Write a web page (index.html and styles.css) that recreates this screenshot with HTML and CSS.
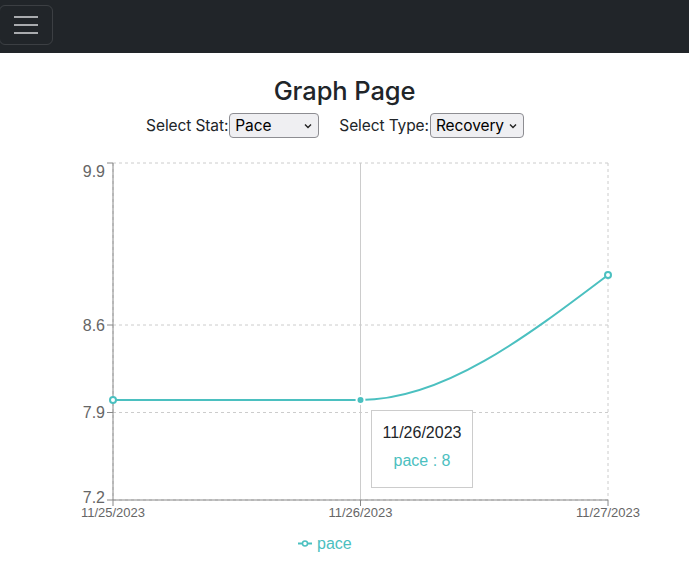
FILE: index.html
```html
<!DOCTYPE html>
<html lang="en">
<head>
<meta charset="utf-8">
<title>Graph Page</title>
<link rel="stylesheet" href="styles.css">
</head>
<body>
<nav class="navbar">
  <button class="toggler" type="button" aria-label="Toggle navigation">
    <span class="bar"></span><span class="bar"></span><span class="bar"></span>
  </button>
</nav>
<main class="page">
  <h1 class="title">Graph Page</h1>
  <div class="controls">
    <label class="control">Select Stat:<span class="select select-stat">Pace<svg class="chev" viewBox="0 0 8 6"><path d="M1 1.5 L4 4.5 L7 1.5" /></svg></span></label>
    <label class="control">Select Type:<span class="select select-type">Recovery<svg class="chev" viewBox="0 0 8 6"><path d="M1 1.5 L4 4.5 L7 1.5" /></svg></span></label>
  </div>
  <div class="chart">
    <svg class="chart-svg" width="689" height="420" viewBox="0 0 689 420">
      <g class="grid">
        <line x1="113" y1="13" x2="608" y2="13"/>
        <line x1="113" y1="175" x2="608" y2="175"/>
        <line x1="113" y1="262.5" x2="608" y2="262.5"/>
        <line x1="113" y1="350" x2="608" y2="350"/>
        <line x1="113" y1="13" x2="113" y2="350"/>
        <line x1="360.5" y1="13" x2="360.5" y2="350"/>
        <line x1="608" y1="13" x2="608" y2="350"/>
      </g>
      <line class="cursor" x1="360.5" y1="13" x2="360.5" y2="350"/>
      <g class="axis">
        <line x1="113" y1="13" x2="113" y2="350"/>
        <line x1="107" y1="13" x2="113" y2="13"/>
        <line x1="107" y1="175" x2="113" y2="175"/>
        <line x1="107" y1="262.5" x2="113" y2="262.5"/>
        <line x1="107" y1="350" x2="113" y2="350"/>
        <line x1="113" y1="350" x2="608" y2="350"/>
        <line x1="113" y1="350" x2="113" y2="356"/>
        <line x1="360.5" y1="350" x2="360.5" y2="356"/>
        <line x1="608" y1="350" x2="608" y2="356"/>
      </g>
      <g class="ytick">
        <text x="105" y="26.5">9.9</text>
        <text x="105" y="181">8.6</text>
        <text x="105" y="268">7.9</text>
        <text x="105" y="353">7.2</text>
      </g>
      <g class="xtick">
        <text x="113" y="367">11/25/2023</text>
        <text x="360.5" y="367">11/26/2023</text>
        <text x="608" y="367">11/27/2023</text>
      </g>
      <path class="series" d="M113,250 L360.5,250 C443,250 525.5,187.5 608,125"/>
      <circle class="dot" cx="113" cy="250" r="3"/>
      <circle class="dot" cx="608" cy="125" r="3"/>
      <circle class="active-dot" cx="360.5" cy="250" r="4"/>
      <g class="legend">
        <line x1="298" y1="393.5" x2="312" y2="393.5"/>
        <circle cx="305" cy="393.5" r="2.5"/>
        <text x="317" y="399">pace</text>
      </g>
    </svg>
    <div class="tooltip">
      <p class="tooltip-label">11/26/2023</p>
      <p class="tooltip-item">pace : 8</p>
    </div>
  </div>
</main>
</body>
</html>
```

FILE: styles.css
```css
* { box-sizing: border-box; }
body {
  margin: 0;
  font-family: "Liberation Sans", Arial, sans-serif;
  font-size: 16px;
  color: #212529;
  background: #fff;
}
.navbar {
  height: 53px;
  background: #212529;
  display: flex;
  align-items: flex-start;
  padding-top: 5px;
}
.toggler {
  width: 54px;
  height: 40px;
  margin-left: -1px;
  padding: 0 0 0 14px;
  background: transparent;
  border: 1px solid rgba(255,255,255,0.12);
  border-radius: 6px;
  display: flex;
  flex-direction: column;
  justify-content: center;
  gap: 6px;
}
.bar {
  display: block;
  width: 24px;
  height: 2px;
  background: #a9abae;
}
.page {
  display: flex;
  flex-direction: column;
  align-items: center;
}
.title {
  margin: 23px 0 0;
  font-family: "Inter", "Liberation Sans", sans-serif;
  font-size: 25.5px;
  font-weight: 500;
  letter-spacing: -0.1px;
  line-height: 29px;
  color: #212529;
}
.controls {
  display: flex;
  gap: 20px;
  margin-top: 8px;
  margin-right: 19px;
  height: 25px;
}
.control {
  display: flex;
  align-items: center;
  font-family: "Inter", "Liberation Sans", sans-serif;
  font-size: 15.5px;
  color: #212529;
  letter-spacing: -0.1px;
}
.select {
  position: relative;
  display: flex;
  align-items: center;
  height: 25px;
  padding-left: 5px;
  margin-left: 1px;
  border: 1px solid #8d8d92;
  border-radius: 4px;
  background: #efeff2;
  color: #000;
  font-size: 15.5px;
}
.select-stat { width: 90px; }
.select-type { width: 94px; }
.chev {
  position: absolute;
  right: 6px;
  top: 9px;
  width: 8px;
  height: 6px;
  fill: none;
  stroke: #222;
  stroke-width: 1.4;
}
.chart {
  position: relative;
  width: 689px;
  height: 420px;
  margin-top: 12px;
}
.chart-svg { display: block; overflow: visible; }
.grid line {
  stroke: #ccc;
  stroke-dasharray: 3 3;
  stroke-width: 1;
}
.cursor { stroke: #ccc; stroke-width: 1; }
.axis line { stroke: #888; stroke-width: 1; }
.ytick text {
  font-family: "Liberation Sans", Arial, sans-serif;
  font-size: 16px;
  fill: #666;
  text-anchor: end;
}
.xtick text {
  font-family: "Liberation Sans", Arial, sans-serif;
  font-size: 13px;
  fill: #666;
  text-anchor: middle;
}
.series {
  fill: none;
  stroke: #4bc0c0;
  stroke-width: 2;
}
.dot {
  fill: #fff;
  stroke: #4bc0c0;
  stroke-width: 2;
}
.active-dot {
  fill: #4bc0c0;
  stroke: #fff;
  stroke-width: 2;
}
.legend line { stroke: #4bc0c0; stroke-width: 2; }
.legend circle { fill: #fff; stroke: #4bc0c0; stroke-width: 1.5; }
.legend text {
  font-family: "Liberation Sans", Arial, sans-serif;
  font-size: 16px;
  fill: #4bc0c0;
}
.tooltip {
  position: absolute;
  left: 371px;
  top: 260px;
  width: 102px;
  height: 78px;
  padding: 10px;
  background: #fff;
  border: 1px solid #ccc;
  text-align: center;
  font-family: "Liberation Sans", Arial, sans-serif;
  font-size: 16px;
}
.tooltip-label {
  margin: 0;
  line-height: 24px;
  color: #212529;
}
.tooltip-item {
  margin: 0;
  padding-top: 4px;
  line-height: 24px;
  color: #4bc0c0;
}
```
